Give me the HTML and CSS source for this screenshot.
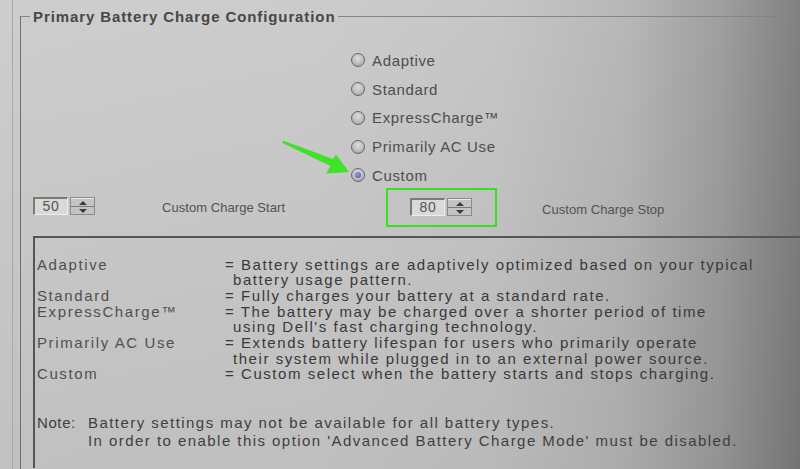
FILE: index.html
```html
<!DOCTYPE html>
<html lang="en">
<head>
<meta charset="utf-8">
<title>Primary Battery Charge Configuration</title>
<link rel="stylesheet" href="styles.css">
</head>
<body>
<div class="screen">
  <fieldset class="group">
    <legend class="group-title">Primary Battery Charge Configuration</legend>

    <div class="radios">
      <div class="radio"><span class="dot"></span><span class="radio-label">Adaptive</span></div>
      <div class="radio"><span class="dot"></span><span class="radio-label">Standard</span></div>
      <div class="radio"><span class="dot"></span><span class="radio-label">ExpressCharge™</span></div>
      <div class="radio"><span class="dot"></span><span class="radio-label">Primarily AC Use</span></div>
      <div class="radio"><span class="dot dot-on"></span><span class="radio-label">Custom</span></div>
    </div>

    <div class="spin-row">
      <div class="spinner spinner-start">
        <span class="spin-value">50</span>
        <span class="spin-btns">
          <span class="spin-btn"><span class="tri-up"></span></span>
          <span class="spin-btn"><span class="tri-down"></span></span>
        </span>
      </div>
      <span class="spin-label label-start">Custom Charge Start</span>
      <div class="highlight">
        <div class="spinner spinner-stop">
          <span class="spin-value">80</span>
          <span class="spin-btns">
            <span class="spin-btn"><span class="tri-up"></span></span>
            <span class="spin-btn"><span class="tri-down"></span></span>
          </span>
        </div>
      </div>
      <span class="spin-label label-stop">Custom Charge Stop</span>
    </div>

    <div class="desc">
      <dl class="desc-list">
        <dt>Adaptive</dt>
        <dd><span class="line">= Battery settings are adaptively optimized based on your typical</span><span class="line cont">battery usage pattern.</span></dd>
        <dt>Standard</dt>
        <dd><span class="line">= Fully charges your battery at a standard rate.</span></dd>
        <dt>ExpressCharge™</dt>
        <dd><span class="line">= The battery may be charged over a shorter period of time</span><span class="line cont">using Dell's fast charging technology.</span></dd>
        <dt>Primarily AC Use</dt>
        <dd><span class="line">= Extends battery lifespan for users who primarily operate</span><span class="line cont">their system while plugged in to an external power source.</span></dd>
        <dt>Custom</dt>
        <dd><span class="line">= Custom select when the battery starts and stops charging.</span></dd>
      </dl>
      <div class="note">
        <span class="note-head">Note:</span>
        <div class="note-body">
          <span class="line">Battery settings may not be available for all battery types.</span>
          <span class="line">In order to enable this option 'Advanced Battery Charge Mode' must be disabled.</span>
        </div>
      </div>
    </div>
  </fieldset>
</div>

<svg class="arrow" width="800" height="469" viewBox="0 0 800 469" aria-hidden="true">
  <polygon points="283,140.5 333,159 336,154.5 349,172 326,173.5 330.5,166 282.5,143" fill="#3fe12a"/>
</svg>
</body>
</html>
```

FILE: styles.css
```css
html, body {
  margin: 0;
  padding: 0;
  width: 800px;
  height: 469px;
  overflow: hidden;
}

body {
  background:
    linear-gradient(to bottom, rgba(255,255,255,0.05), rgba(0,0,0,0.05)),
    linear-gradient(to right, #cbcbcb 0%, #c9c9c9 40%, #c3c3c3 62%, #b4b4b4 78%, #9a9a9a 90%, #7a7a7a 100%);
  font-family: "Liberation Sans", Arial, sans-serif;
  color: #3e3e3e;
  position: relative;
}

.screen {
  margin-left: 12px;
  border-left: 1px solid #a9a9a9;
  padding-left: 7px;
  height: 469px;
  box-sizing: border-box;
  padding-top: 8px;
}

.group {
  margin: 0;
  border: 0;
  border-top: 1px solid #858585;
  border-left: 1px solid #6e6e6e;
  padding: 21px 0 0 9px;
  min-width: 0;
  width: 780px;
  height: 461px;
  box-sizing: border-box;
}

.group-title {
  padding: 0 3px;
  font-weight: bold;
  font-size: 15px;
  line-height: 17px;
  letter-spacing: 0.9px;
  color: #474747;
}

.radios {
  display: flex;
  flex-direction: column;
  align-items: flex-start;
  margin-left: 321px;
}

.radio {
  display: flex;
  align-items: center;
  height: 28.75px;
}

.dot {
  width: 12px;
  height: 12px;
  border-radius: 50%;
  border: 1px solid #666666;
  background: radial-gradient(circle at 50% 35%, #dcdcdc 0%, #bdbdbd 55%, #9a9a9a 100%);
  box-sizing: content-box;
  display: flex;
  align-items: center;
  justify-content: center;
}

.dot-on::after {
  content: "";
  width: 6px;
  height: 6px;
  border-radius: 50%;
  background: radial-gradient(circle at 40% 40%, #8f98e8, #4a55b8);
}

.radio-label {
  margin-left: 7px;
  font-size: 15px;
  letter-spacing: 0.65px;
  color: #4d4d4d;
}

.spin-row {
  display: flex;
  align-items: center;
  margin-top: -2px;
  height: 39px;
}

.spinner {
  display: flex;
  align-items: stretch;
  height: 18px;
}

.spinner-start {
  margin-left: 3px;
  margin-top: -2px;
}

.spin-value {
  width: 35px;
  box-sizing: border-box;
  border-top: 2px solid #7a7a7a;
  border-left: 2px solid #7a7a7a;
  border-bottom: 1px solid #eeeeee;
  border-right: 1px solid #eeeeee;
  background: #d9d9d6;
  font-size: 14px;
  line-height: 15px;
  letter-spacing: 0.8px;
  text-align: center;
  color: #555555;
}

.spin-btns {
  display: flex;
  flex-direction: column;
  width: 25px;
  margin-left: 2px;
  border: 1px solid #8a8a8a;
  box-sizing: border-box;
  background: #c4c4c4;
}

.spin-btn {
  flex: 1;
  display: flex;
  align-items: center;
  justify-content: center;
  border-top: 1px solid #ececec;
}

.spin-btn + .spin-btn {
  border-top: 1px solid #7a7a7a;
}

.tri-up {
  width: 0;
  height: 0;
  border-left: 4px solid transparent;
  border-right: 4px solid transparent;
  border-bottom: 4px solid #3a3a3a;
}

.tri-down {
  width: 0;
  height: 0;
  border-left: 4px solid transparent;
  border-right: 4px solid transparent;
  border-top: 4px solid #3a3a3a;
}

.spin-label {
  font-size: 13px;
  letter-spacing: 0.05px;
  color: #525252;
}

.label-start {
  margin-left: 67px;
}

.highlight {
  margin-left: 101px;
  width: 111px;
  height: 39px;
  box-sizing: border-box;
  border: 2px solid #38e021;
  display: flex;
  align-items: center;
  padding-left: 22px;
}

.spinner-stop {
  width: 63px;
}

.label-stop {
  margin-left: 45px;
  margin-top: 4px;
}

.desc {
  margin-top: 9px;
  margin-left: 3px;
  border-top: 2px solid #555555;
  border-left: 2px solid #555555;
  padding: 19px 0 0 2px;
  height: 232px;
  box-sizing: border-box;
}

.desc-list {
  margin: 0;
  display: grid;
  grid-template-columns: 188px 1fr;
  font-size: 15px;
  line-height: 15.65px;
  letter-spacing: 1.55px;
}

.desc-list dt {
  color: #505050;
  letter-spacing: 1.6px;
}

.desc-list dd {
  margin: 0;
  color: #393939;
}

.line {
  display: block;
  white-space: nowrap;
}

.cont {
  padding-left: 8px;
}

.note {
  display: flex;
  margin-top: 32px;
  font-size: 15px;
  line-height: 18px;
  color: #3f3f3f;
  letter-spacing: 1.45px;
}

.note-head {
  width: 51px;
  flex: none;
  letter-spacing: 0.6px;
}

.arrow {
  position: absolute;
  left: 0;
  top: 0;
  pointer-events: none;
}
```
